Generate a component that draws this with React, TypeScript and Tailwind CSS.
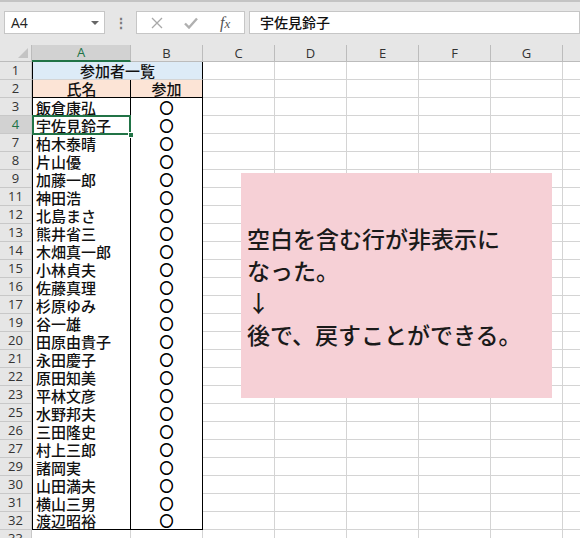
import React from 'react'

const names: [number, string][] = [
    [3, '飯倉康弘'],
    [4, '宇佐見鈴子'],
    [7, '柏木泰晴'],
    [8, '片山優'],
    [9, '加藤一郎'],
    [11, '神田浩'],
    [12, '北島まさ'],
    [13, '熊井省三'],
    [14, '木畑真一郎'],
    [15, '小林貞夫'],
    [16, '佐藤真理'],
    [17, '杉原ゆみ'],
    [19, '谷一雄'],
    [20, '田原由貴子'],
    [21, '永田慶子'],
    [22, '原田知美'],
    [23, '平林文彦'],
    [25, '水野邦夫'],
    [26, '三田隆史'],
    [27, '村上三郎'],
    [29, '諸岡実'],
    [30, '山田満夫'],
    [31, '横山三男'],
    [32, '渡辺昭裕'],
];

const columns = ['C', 'D', 'E', 'F', 'G', 'H'];

function RowHead({ n, active }: { n: number; active?: boolean }) {
    return (
        <div
            className={
                active
                    ? "w-[32px] shrink-0 flex items-center justify-center border-r border-b border-[#c8c8c8] bg-[#d2d2d2] text-[#217346] text-[13px] leading-[17px] font-['Open_Sans',sans-serif]"
                    : "w-[32px] shrink-0 flex items-center justify-center border-r border-b border-[#c8c8c8] bg-[#e6e6e6] text-[#333] text-[13px] leading-[17px] font-['Open_Sans',sans-serif]"
            }
        >
            {n}
        </div>
    )
}

function EmptyCells() {
    return (
        <>
            {columns.map((c) => (
                <div key={c} className="w-[72px] shrink-0 border-r border-b border-[#d4d4d4]" />
            ))}
        </>
    )
}

export default function App() {
    return (
        <div className="relative w-[580px] h-[538px] overflow-hidden bg-white font-['Open_Sans','Liberation_Sans',sans-serif]">
            {/* formula bar */}
            <div className="h-[45px] bg-[#e6e6e6] border-t-2 border-[#c4c4c4] flex items-start pt-[9px]">
                <div className="ml-[4px] w-[101px] h-[23px] bg-white border border-[#c6c6c6] flex items-center justify-between pl-[6px] pr-[5px] text-[14px] text-[#222]">
                    <span>A4</span>
                    <span className="w-0 h-0 border-l-[4px] border-r-[4px] border-t-[4px] border-l-transparent border-r-transparent border-t-[#666]" />
                </div>
                <div className="w-[31px] h-[23px] flex items-center justify-center text-[#777] text-[14px] font-bold">⋮</div>
                <div className="w-[109px] h-[23px] bg-white border border-[#c6c6c6] flex items-center pl-[14px]">
                    <svg width="12" height="12" viewBox="0 0 12 12" className="shrink-0">
                        <path d="M1 1L11 11M11 1L1 11" stroke="#a8a8a8" strokeWidth="1.3" fill="none" />
                    </svg>
                    <svg width="14" height="12" viewBox="0 0 14 12" className="ml-[21px] shrink-0">
                        <path d="M1 6.5L5 10.5L13 1.5" stroke="#b0b0b0" strokeWidth="2.4" fill="none" />
                    </svg>
                    <span className="ml-[22px] text-[16px] italic text-[#555] font-['Liberation_Serif',serif]">
                        f<span className="text-[13px]">x</span>
                    </span>
                </div>
                <div className="ml-[4px] flex-1 h-[23px] bg-white border border-[#c6c6c6] flex items-center pl-[10px] text-[14px] font-medium text-[#111] font-['Noto_Sans_CJK_JP',sans-serif]">
                    宇佐見鈴子
                </div>
            </div>

            {/* column headers */}
            <div className="flex h-[17px] text-[13px] leading-[17px] text-[#333]">
                <div className="relative w-[32px] shrink-0 bg-[#e6e6e6] border-r border-b border-[#bcbcbc]">
                    <svg width="10" height="10" viewBox="0 0 10 10" className="absolute right-[3px] bottom-[3px]">
                        <path d="M10 0L10 10L0 10Z" fill="#c4c4c4" />
                    </svg>
                </div>
                <div className="w-[99px] shrink-0 bg-[#d2d2d2] border-r border-[#bcbcbc] border-b-2 border-b-[#217346] flex items-center justify-center text-[#217346]">A</div>
                <div className="w-[72px] shrink-0 bg-[#e6e6e6] border-r border-b border-[#bcbcbc] flex items-center justify-center">B</div>
                {columns.map((c) => (
                    <div key={c} className="w-[72px] shrink-0 bg-[#e6e6e6] border-r border-b border-[#bcbcbc] flex items-center justify-center">{c}</div>
                ))}
            </div>

            {/* sheet */}
            <div className="flex flex-col text-[15px] leading-[17px] font-medium text-[#111] font-['Noto_Sans_CJK_JP',sans-serif]">
                <div className="flex h-[18px]">
                    <RowHead n={1} />
                    <div className="w-[171px] shrink-0 bg-[#ddebf7] border-l border-r border-black border-b border-b-[#d4d4d4] flex items-center justify-center">
                        参加者一覧
                    </div>
                    <EmptyCells />
                </div>
                <div className="flex h-[18px]">
                    <RowHead n={2} />
                    <div className="w-[99px] shrink-0 bg-[#fce4d6] border-l border-r border-b border-black flex items-center justify-center">氏名</div>
                    <div className="w-[72px] shrink-0 bg-[#fce4d6] border-r border-b border-black flex items-center justify-center">参加</div>
                    <EmptyCells />
                </div>
                {names.map(([n, name], i) => {
                    const last = i === names.length - 1;
                    return (
                        <div key={n} className="flex h-[18px]">
                            <RowHead n={n} active={n === 4} />
                            <div className={last
                                ? "relative w-[99px] shrink-0 border-l border-r border-b border-black flex items-center pl-[3px]"
                                : "relative w-[99px] shrink-0 border-l border-r border-black flex items-center pl-[3px]"}>
                                {name}
                                {n === 4 && (
                                    <>
                                        <div className="absolute -left-[1px] -top-[1px] -right-[1px] -bottom-[1px] border-2 border-[#217346] z-10" />
                                        <div className="absolute -right-[4px] -bottom-[4px] w-[6px] h-[6px] bg-[#217346] border border-white z-20" />
                                    </>
                                )}
                            </div>
                            <div className={last
                                ? "w-[72px] shrink-0 border-r border-b border-black flex items-center justify-center"
                                : "w-[72px] shrink-0 border-r border-black flex items-center justify-center"}>
                                <span className="text-[13.5px] leading-[15px] [-webkit-text-stroke:0.8px_#000]">○</span>
                            </div>
                            <EmptyCells />
                        </div>
                    )
                })}
                <div className="flex h-[18px]">
                    <RowHead n={33} />
                    <div className="w-[99px] shrink-0 border-r border-b border-[#d4d4d4]" />
                    <div className="w-[72px] shrink-0 border-r border-b border-[#d4d4d4]" />
                    <EmptyCells />
                </div>
            </div>

            {/* note shape */}
            <div className="absolute left-[241px] top-[173px] w-[311px] h-[225px] bg-[#f6d0d6] flex flex-col justify-center pl-[6px] text-[23px] leading-[32px] font-medium text-[#1a1a1a] font-['Noto_Sans_CJK_JP',sans-serif]">
                <div>空白を含む行が非表示に</div>
                <div>なった。</div>
                <div>↓</div>
                <div>後で、戻すことができる。</div>
            </div>
        </div>
    )
}
